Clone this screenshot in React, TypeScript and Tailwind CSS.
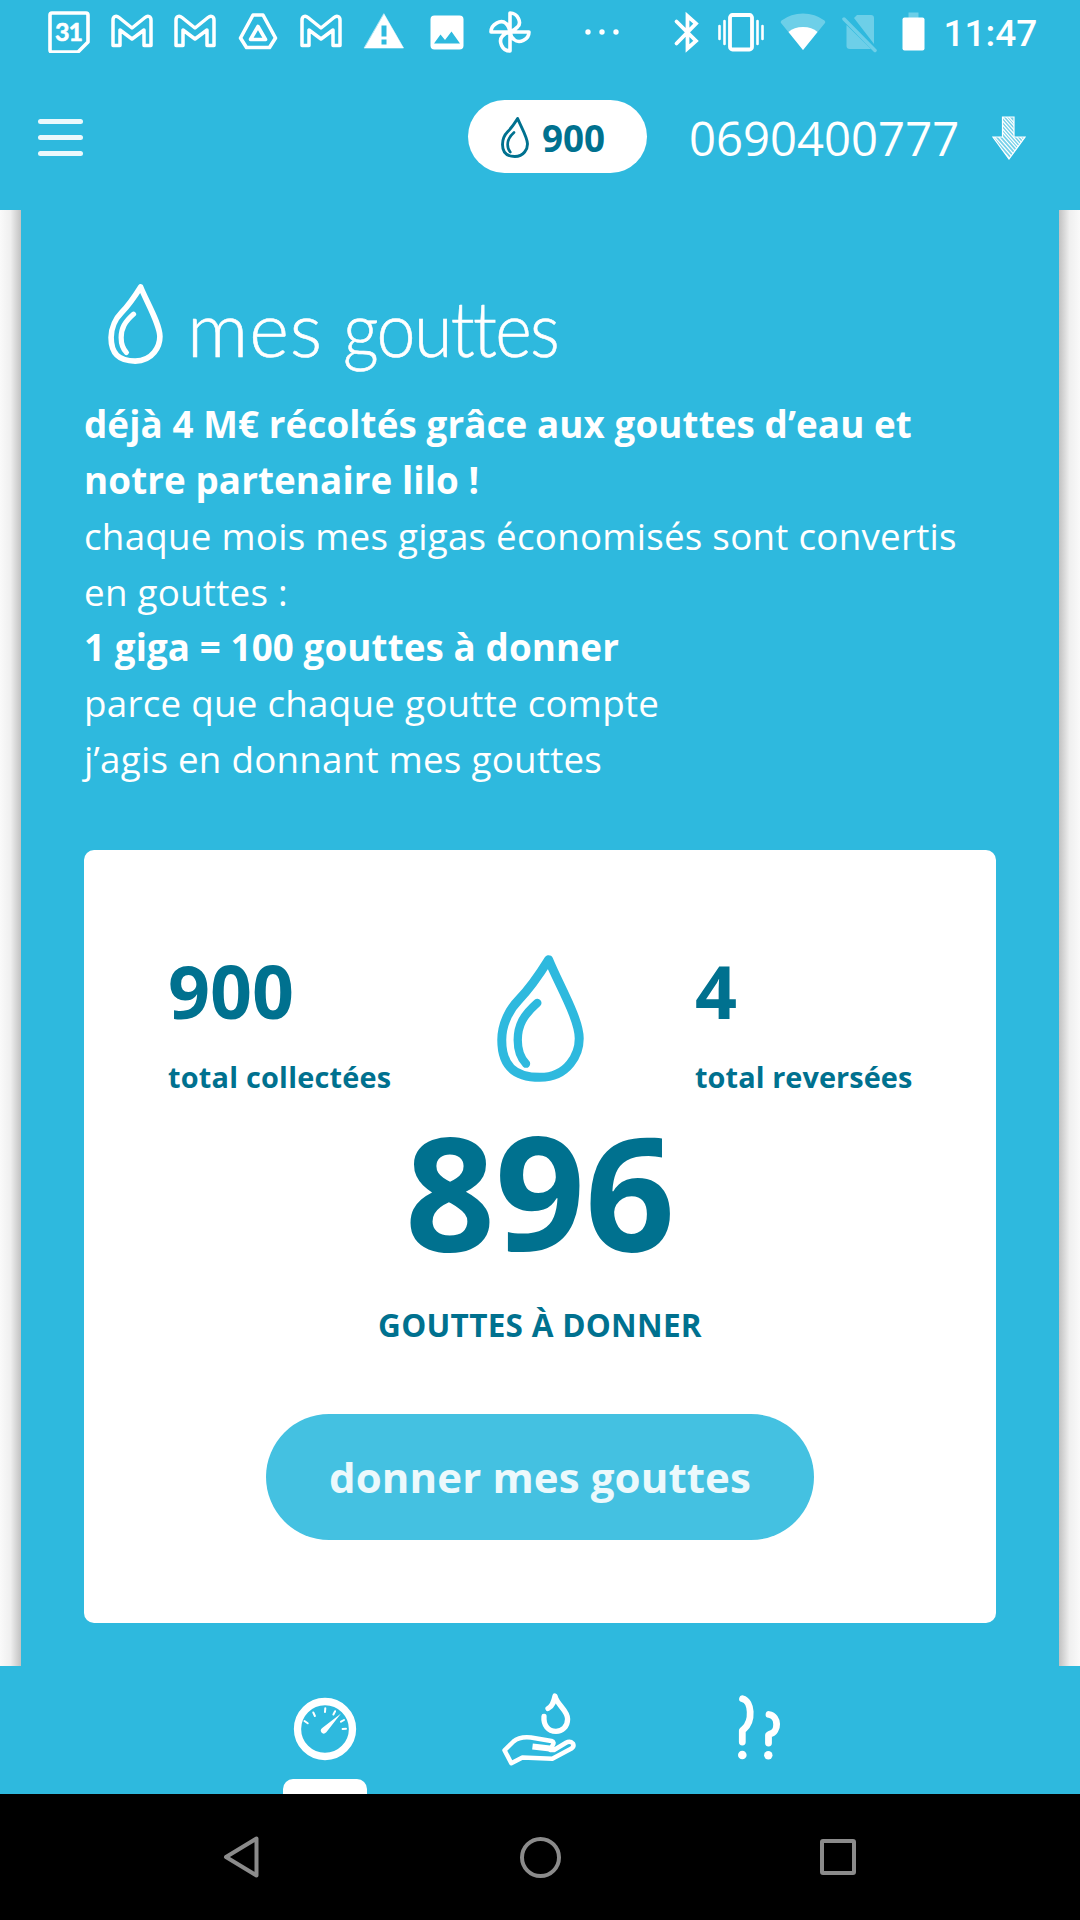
import React from "react";

type IconProps = { className?: string };

function Drop({ className }: IconProps) {
  return (
    <svg viewBox="51 44 261 382" fill="none" stroke="currentColor" strokeLinecap="round" strokeLinejoin="round" className={className}>
      <path strokeWidth="27" d="M206 58C235 130 298 235 298 295C298 340 266 412 180 412C100 412 65 375 65 300C65 250 90 205 115 180C148 146 180 100 206 58Z" />
      <path strokeWidth="25" d="M172 188C130 225 113 255 113 300C113 335 125 358 138 371" />
    </svg>
  );
}

function Slot({ children }: { children: React.ReactNode }) {
  return (
    <svg viewBox="0 0 42 42" className="mx-[10.5px] size-[42px] shrink-0" fill="none" stroke="white" strokeWidth="3.6" strokeLinejoin="round" strokeLinecap="round">
      {children}
    </svg>
  );
}

function Gmail() {
  return (
    <Slot>
      <path strokeWidth="3.5" d="M2 9C2 5.5 5 4 8 6.5L21 17L34 6.5C37 4 40 5.500 40 9V34.500H33V19L21 28L9 19V34.500H2Z" />
    </Slot>
  );
}

function StatusBar() {
  return (
    <div className="flex h-[63px] items-center pl-[37px] text-white">
      <Slot>
        <path d="M4 2H38Q40 2 40 4V31L30 41H4Q2 41 2 39V4Q2 2 4 2Z" />
        <text x="20.500" y="30" textAnchor="middle" fill="white" stroke="white" strokeWidth="0.6" className="font-['Lato'] text-[25px] font-bold tracking-[-1px]">31</text>
      </Slot>
      <Gmail />
      <Gmail />
      <Slot>
        <path d="M16 4H26L38.500 27L32.500 36.500H9.500L3.500 27Z" />
        <path d="M21 15.500L28.500 28.500H13.500Z" />
      </Slot>
      <Gmail />
      <Slot>
        <path fill="white" strokeWidth="0.6" d="M21 3L40.500 37H1.500Z" />
        <path stroke="none" fill="#2eb9de" d="M18.500 14.500h5v11h-5zM18.500 28.500h5v5h-5z" />
      </Slot>
      <Slot>
        <rect x="4.500" y="4.500" width="33" height="34" rx="4" fill="white" stroke="none" />
        <path stroke="none" fill="#2eb9de" d="M8 32.500L14.500 23.500L19 29L25.500 20.500L34 32.500Z" />
      </Slot>
      <Slot>
        <path d="M21 21V2C29 2 33 12 28.500 16Q26 19 21 21H40C40 29 30 33 25 28.500Q22 26 21 21V40C13 40 9 30 13.500 25Q16 22 21 21H2C2 13 12 8 17 12.500Q20 15 21 21Z" />
      </Slot>
      <svg viewBox="0 0 36 8" className="ml-[43px] h-2 w-9" fill="white">
        <circle cx="4" cy="4" r="2.700" /><circle cx="18" cy="4" r="2.700" /><circle cx="32" cy="4" r="2.700" />
      </svg>
      <svg viewBox="0 0 28 42" className="ml-[51.500px] h-[42px] w-7" fill="none" stroke="white" strokeWidth="3.800" strokeLinecap="round" strokeLinejoin="miter">
        <path d="M4.500 10.500L24 30L15.500 37.500V5L24 12.500L4.500 32.500" />
      </svg>
      <svg viewBox="0 0 48 42" className="ml-[17px] h-[42px] w-12" fill="none" stroke="white" strokeWidth="2.600" strokeLinecap="round">
        <rect x="13" y="4" width="22" height="34.500" rx="2.500" strokeWidth="3.800" />
        <path d="M2.500 15v13M7.500 10v23M40.500 10v23M45.500 15v13" />
      </svg>
      <svg viewBox="0 0 46 42" className="ml-[15px] h-[42px] w-[46px]">
        <path fill="#6dcfe8" d="M23 39L1 12Q0 11 1.500 9.500Q11 2.500 23 2.500T44.500 9.500Q46 11 45 12Z" />
        <path fill="white" d="M23 39L8.500 21Q14 16 23 16T37.500 21Z" />
      </svg>
      <svg viewBox="0 0 36 42" className="ml-4 h-[42px] w-9">
        <path fill="#6dcfe8" d="M12 7L15 4H29Q32 4 32 7V33ZM4.500 14L29 38H8Q4.500 38 4.500 35Z" />
        <path stroke="#6dcfe8" strokeWidth="3.500" strokeLinecap="round" d="M2 8L33 39.500" />
      </svg>
      <svg viewBox="0 0 24 42" className="ml-[23px] h-[42px] w-6">
        <rect x="7.500" y="1.500" width="10" height="6" fill="#6dcfe8" />
        <rect x="1.500" y="6.500" width="22" height="33" rx="2" fill="white" />
      </svg>
      <span className="ml-[19px] mt-[3px] font-['Roboto'] text-[37px] font-medium leading-none">11:47</span>
    </div>
  );
}

function HatchedArrow() {
  return (
    <svg viewBox="0 0 34 44" className="ml-[33px] h-11 w-[34px]" fill="none" stroke="white">
      <defs>
        <clipPath id="arrow-shape"><path d="M10.500 1H22V21H33L17 43L1 21H10.500Z" /></clipPath>
      </defs>
      <path fill="white" fillOpacity="0.35" strokeWidth="1.200" d="M10.500 1H22V21H33L17 43L1 21H10.500Z" />
      <g clipPath="url(#arrow-shape)" strokeWidth="1.200">
        <path d="M8 -6l30 34M8 -2l30 34M8 2l30 34M8 6l30 34M8 10l30 34M4 9l30 34M0 9l30 34M-4 9l30 34M-8 9l30 34M-12 9l30 34M8 -9l30 34" />
      </g>
    </svg>
  );
}

function Header() {
  return (
    <header className="flex h-[147px] items-start pl-[38px] pt-[37px]">
      <div className="mt-[19px] flex w-[45px] flex-col gap-[11px]">
        <div className="h-[5px] rounded-full bg-white/90" />
        <div className="h-[5px] rounded-full bg-white/90" />
        <div className="h-[5px] rounded-full bg-white/90" />
      </div>
      <div className="ml-[385px] flex h-[73px] w-[179px] items-center rounded-[36.500px] bg-white pl-[33px] text-[#00718f]">
        <Drop className="mt-[2px] h-[41px] w-7" />
        <span className="ml-[13px] mt-1 text-[36.750px] font-bold leading-none">900</span>
      </div>
      <div className="ml-[42px] flex h-[76px] items-center text-[47.250px] leading-none text-white">
        0690400777
        <HatchedArrow />
      </div>
    </header>
  );
}

type StatProps = { value: string; label: string; className: string };

function Stat({ value, label, className }: StatProps) {
  return (
    <div className={className}>
      <div className="text-[73.500px] leading-[100px] tracking-normal">{value}</div>
      <div className="mt-4 whitespace-nowrap text-[28.875px] leading-10">{label}</div>
    </div>
  );
}

function DonationCard() {
  return (
    <section className="mt-[62px] h-[773px] rounded-[10px] bg-white font-bold text-[#00718f]">
      <div className="flex h-[260px] items-start pl-[84px]">
        <Stat value="900" label="total collectées" className="mt-[91px] w-[329px] tracking-[0.22px]" />
        <Drop className="mt-[105px] h-[127px] w-[87px] text-[#2eb9de]" />
        <Stat value="4" label="total reversées" className="ml-[111px] mt-[91px] tracking-[0.08px]" />
      </div>
      <div className="text-center text-[157.500px] leading-[160px]">896</div>
      <div className="mt-[35px] text-center text-[31.500px] leading-[40px] tracking-[0.28px]">GOUTTES À DONNER</div>
      <button className="mx-auto mt-[69px] block h-[126px] w-[548px] rounded-[63px] bg-[#44c1e1] text-[42px] font-bold tracking-[0.12px] text-[#ecf9fc]">
        donner mes gouttes
      </button>
    </section>
  );
}

function TabBar() {
  return (
    <nav className="flex h-32 items-start text-white">
      <div className="ml-[283px] flex h-32 w-[84px] flex-col items-center justify-between pt-[31px]">
        <svg viewBox="293 1697 64 64" className="size-16" fill="none" stroke="currentColor" strokeLinecap="round">
          <circle cx="325" cy="1729" r="27.500" strokeWidth="7.300" />
          <path strokeWidth="2" d="M304.500 1721l3.200 2.300M313.300 1712.500l1.600 3.500M325.300 1708.200l-.3 3.800M335.100 1711.200l-1.700 3.300M344 1720l-3 1.700M346 1728.700l-3.400 .2" />
          <path fill="currentColor" stroke="none" d="M341 1713.500L326.300 1732.300Q323.500 1735 321.300 1732.200Q319.800 1729.800 322.200 1728Z" />
        </svg>
        <div className="h-[15px] w-full rounded-t-[10px] bg-white" />
      </div>
      <svg viewBox="501 1692 76 76" className="ml-[134px] mt-[26px] size-[76px]" fill="none" stroke="currentColor" strokeLinecap="round" strokeLinejoin="round">
        <path strokeWidth="5.300" d="M548 1708.500C553 1706 554 1701 555 1696C557 1705 567.600 1710 567.600 1719C567.600 1727 562 1731.300 556 1731.300C548 1731.300 543.300 1725 544 1716.500" />
        <path strokeWidth="4.500" d="M504.500 1750.300L513.500 1741.500C518 1737.500 526 1737 531 1737.500L551.500 1741Q555 1742 552.500 1745.500L550.500 1750L554 1750L566 1742.800Q570 1740.500 573 1743.500Q574.500 1746.500 571 1748.800L552.300 1758.700L522.400 1757.500L511.300 1763.200Z" />
        <path strokeWidth="6" strokeLinecap="butt" d="M532.500 1746.500L552 1748.700" />
      </svg>
      <svg viewBox="737 1694 45 67" className="ml-[160px] mt-7 h-[67px] w-[45px]" fill="none" stroke="currentColor" strokeLinecap="round" strokeLinejoin="round" strokeWidth="6.800">
        <path d="M742.500 1698.700C752 1701 753 1721 744 1729L742.300 1730.500V1742" />
        <path d="M769 1714.500C779 1716 779 1732 770 1734L768.500 1735V1743" />
        <circle cx="742.300" cy="1755" r="4.300" fill="currentColor" stroke="none" />
        <circle cx="768.300" cy="1755.300" r="4.200" fill="currentColor" stroke="none" />
      </svg>
    </nav>
  );
}

function SystemNav() {
  return (
    <div className="flex h-[126px] items-center justify-between bg-black pl-[222px] pr-[224px]">
      <svg viewBox="0 0 38 42" className="h-[42px] w-[38px]" fill="none" stroke="#8b8b8b" strokeWidth="4" strokeLinejoin="round">
        <path d="M34.500 2.500V39.500L4 21Z" />
      </svg>
      <div className="size-[41px] rounded-full border-4 border-[#8b8b8b]" />
      <div className="size-9 rounded-[3px] border-4 border-[#8b8b8b]" />
    </div>
  );
}

export default function App() {
  return (
    <div className="h-[1920px] w-[1080px] overflow-hidden bg-[#2eb9de] font-['Open_Sans',sans-serif]">
      <StatusBar />
      <Header />
      <div className="flex h-[1456px]">
        <div className="w-[21px] bg-linear-to-r from-[#fafafa] via-[#efefef] to-[#c2c2c2]" />
        <main className="flex-1 px-[63px] pt-[74px] text-white">
          <div className="flex h-[113px] items-start pl-6">
            <Drop className="h-[80px] w-[55px]" />
            <h1 className="ml-6 mt-[-1px] flex whitespace-nowrap font-['Lato'] text-[76px] font-light leading-[90px] [-webkit-text-stroke:0.6px_white]">
              <span className="w-[156px] tracking-[1px]">mes </span>
              <span className="origin-left scale-x-[0.92] tracking-[-1.800px]">gouttes</span>
            </h1>
          </div>
          <div className="whitespace-nowrap text-[36.750px] leading-[55.850px] tracking-[0.250px]">
            <p className="font-bold tracking-[0.110px]">déjà 4 M€ récoltés grâce aux gouttes d’eau et<br />notre partenaire lilo !</p>
            <p>chaque mois mes gigas économisés sont convertis<br />en gouttes :</p>
            <p className="font-bold tracking-[0.110px]">1 giga = 100 gouttes à donner</p>
            <p>parce que chaque goutte compte<br />j’agis en donnant mes gouttes</p>
          </div>
          <DonationCard />
        </main>
        <div className="w-[21px] bg-linear-to-l from-[#fafafa] via-[#efefef] to-[#c2c2c2]" />
      </div>
      <TabBar />
      <SystemNav />
    </div>
  );
}
